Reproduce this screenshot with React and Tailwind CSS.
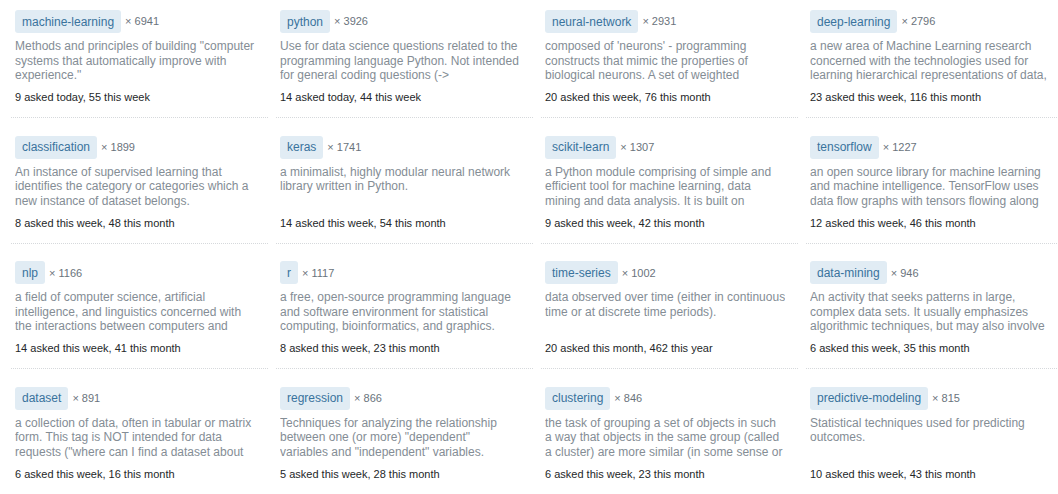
import React from "react";

const tags = [
  ["machine-learning", "6941", 'Methods and principles of building "computer systems that automatically improve with experience."', "9 asked today, 55 this week"],
  ["python", "3926", "Use for data science questions related to the programming language Python. Not intended for general coding questions (->", "14 asked today, 44 this week"],
  ["neural-network", "2931", "composed of 'neurons' - programming constructs that mimic the properties of biological neurons. A set of weighted", "20 asked this week, 76 this month"],
  ["deep-learning", "2796", "a new area of Machine Learning research concerned with the technologies used for learning hierarchical representations of data,", "23 asked this week, 116 this month"],
  ["classification", "1899", "An instance of supervised learning that identifies the category or categories which a new instance of dataset belongs.", "8 asked this week, 48 this month"],
  ["keras", "1741", "a minimalist, highly modular neural network library written in Python.", "14 asked this week, 54 this month"],
  ["scikit-learn", "1307", "a Python module comprising of simple and efficient tool for machine learning, data mining and data analysis. It is built on", "9 asked this week, 42 this month"],
  ["tensorflow", "1227", "an open source library for machine learning and machine intelligence. TensorFlow uses data flow graphs with tensors flowing along", "12 asked this week, 46 this month"],
  ["nlp", "1166", "a field of computer science, artificial intelligence, and linguistics concerned with the interactions between computers and", "14 asked this week, 41 this month"],
  ["r", "1117", "a free, open-source programming language and software environment for statistical computing, bioinformatics, and graphics.", "8 asked this week, 23 this month"],
  ["time-series", "1002", "data observed over time (either in continuous time or at discrete time periods).", "20 asked this month, 462 this year"],
  ["data-mining", "946", "An activity that seeks patterns in large, complex data sets. It usually emphasizes algorithmic techniques, but may also involve", "6 asked this week, 35 this month"],
  ["dataset", "891", 'a collection of data, often in tabular or matrix form. This tag is NOT intended for data requests ("where can I find a dataset about', "6 asked this week, 16 this month"],
  ["regression", "866", 'Techniques for analyzing the relationship between one (or more) "dependent" variables and "independent" variables.', "5 asked this week, 28 this month"],
  ["clustering", "846", "the task of grouping a set of objects in such a way that objects in the same group (called a cluster) are more similar (in some sense or", "6 asked this week, 23 this month"],
  ["predictive-modeling", "815", "Statistical techniques used for predicting outcomes.", "10 asked this week, 43 this month"],
];

export default function App() {
  return (
    <div className="w-[1058px] h-[494px] overflow-hidden bg-white" style={{ fontFamily: '"Liberation Sans", Arial, sans-serif' }}>
      <div className="grid grid-cols-[257px_257px_257px_257px] gap-x-[8px] gap-y-[7.67px] pl-[11px]">
        {tags.map(([name, count, desc, stats]) => (
          <div key={name} className="h-[118px] border-b border-dotted border-[#d6d9dc] pt-[10px] pl-[4px] pr-[12.75px]">
            <div className="flex items-center h-[23px]">
              <span className="h-[23px] flex items-center px-[7px] rounded-[3px] bg-[#e1ecf4] text-[#39739d] text-[12px]">{name}</span>
              <span className="ml-[4px] text-[11px] text-[#6a737c]">× {count}</span>
            </div>
            <div className="mt-[6px] h-[44px] overflow-hidden text-[12px] leading-[14.5px] text-[#848d95]">{desc}</div>
            <div className="mt-[8px] text-[11px] leading-[13px] text-[#242729]">{stats}</div>
          </div>
        ))}
      </div>
    </div>
  );
}
